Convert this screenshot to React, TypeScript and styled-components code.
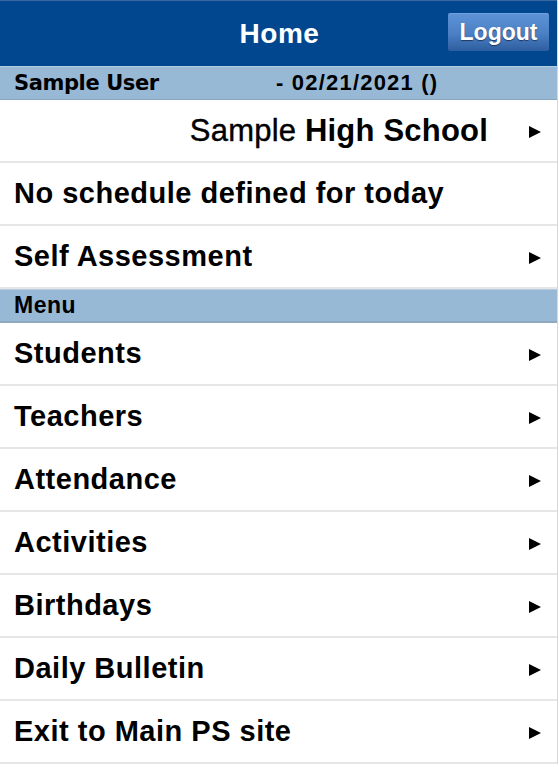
import React from "react";
import styled, { createGlobalStyle } from "styled-components";

const GlobalStyle = createGlobalStyle`
    html, body {
        margin: 0;
        padding: 0;
        background: #fff;
    }
    body {
        font-family: "Liberation Sans", Arial, sans-serif;
        color: #000;
    }
`;

const Page = styled.div`
    width: 557px;
    display: flex;
    flex-direction: column;
    border-right: 1px solid #d8d8d8;
`;

const Header = styled.header`
    height: 66px;
    background-color: #00478f;
    border-top: 1px solid #3b67a0;
    box-sizing: border-box;
    display: flex;
    align-items: center;
    justify-content: center;
    position: relative;
`;

const Title = styled.h1`
    margin: 0;
    color: #fff;
    font-size: 28px;
    font-weight: 700;
    letter-spacing: 0.5px;
    padding-left: 2px;
`;

const LogoutButton = styled.button`
    position: absolute;
    right: 8px;
    top: 12px;
    width: 101px;
    height: 38px;
    border: 0;
    border-top: 1px solid #6fa0dd;
    border-radius: 2px;
    background: linear-gradient(#5d93d6, #4a7fc4 55%, #2d5d9e);
    color: #fff;
    font-family: "Liberation Sans", Arial, sans-serif;
    font-size: 23px;
    font-weight: 700;
    text-shadow: 0 1px 1px rgba(0, 0, 0, 0.5);
    padding: 0;
`;

const InfoBar = styled.div`
    height: 34px;
    box-sizing: border-box;
    background-color: #98b9d6;
    border-top: 1px solid #b4cde3;
    border-bottom: 1px solid #8aa7bf;
    display: grid;
    grid-template-columns: 262px 1fr;
    align-items: center;
    padding-left: 14px;
`;

const UserName = styled.span`
    font-family: "DejaVu Sans", Verdana, sans-serif;
    font-size: 21px;
    font-weight: 700;
    letter-spacing: -0.4px;
`;

const DateText = styled.span`
    font-size: 22px;
    font-weight: 700;
    letter-spacing: 1.2px;
`;

const SectionBar = styled.div`
    height: 34px;
    box-sizing: border-box;
    background-color: #98b9d6;
    border-top: 1px solid #b4cde3;
    border-bottom: 2px solid #8ea9c0;
    display: flex;
    align-items: center;
    padding-left: 14px;
    font-size: 23px;
    font-weight: 700;
    letter-spacing: 0.5px;
`;

const Row = styled.div<{ $align?: "left" | "right" }>`
    height: 63px;
    box-sizing: border-box;
    border-bottom: 2px solid #e6e6e6;
    display: flex;
    align-items: center;
    justify-content: ${(p) => (p.$align === "right" ? "flex-end" : "space-between")};
    padding: 0 16px 0 14px;
    font-size: 29px;
    font-weight: 700;
    letter-spacing: 0.5px;
`;

const RowLabel = styled.span`
    white-space: nowrap;
`;

const SchoolName = styled.span`
    font-size: 31px;
    font-weight: 400;
    letter-spacing: 0.2px;
    margin-right: 41px;
    -webkit-text-stroke: 0.4px #000;

    b {
        font-weight: 700;
        -webkit-text-stroke: 0;
    }
`;

const Arrow = styled.span`
    width: 0;
    height: 0;
    border-top: 6.5px solid transparent;
    border-bottom: 6.5px solid transparent;
    border-left: 12px solid #000;
    margin-top: 3px;
`;

const menuItems = [
    "Students",
    "Teachers",
    "Attendance",
    "Activities",
    "Birthdays",
    "Daily Bulletin",
    "Exit to Main PS site",
];

export default function App() {
    return (
        <>
            <GlobalStyle />
            <Page>
                <Header>
                    <Title>Home</Title>
                    <LogoutButton>Logout</LogoutButton>
                </Header>
                <InfoBar>
                    <UserName>Sample User</UserName>
                    <DateText>- 02/21/2021 ()</DateText>
                </InfoBar>
                <Row $align="right">
                    <SchoolName>
                        Sample <b>High School</b>
                    </SchoolName>
                    <Arrow />
                </Row>
                <Row>
                    <RowLabel>No schedule defined for today</RowLabel>
                </Row>
                <Row>
                    <RowLabel>Self Assessment</RowLabel>
                    <Arrow />
                </Row>
                <SectionBar>Menu</SectionBar>
                {menuItems.map((item) => (
                    <Row key={item}>
                        <RowLabel>{item}</RowLabel>
                        <Arrow />
                    </Row>
                ))}
            </Page>
        </>
    );
}
